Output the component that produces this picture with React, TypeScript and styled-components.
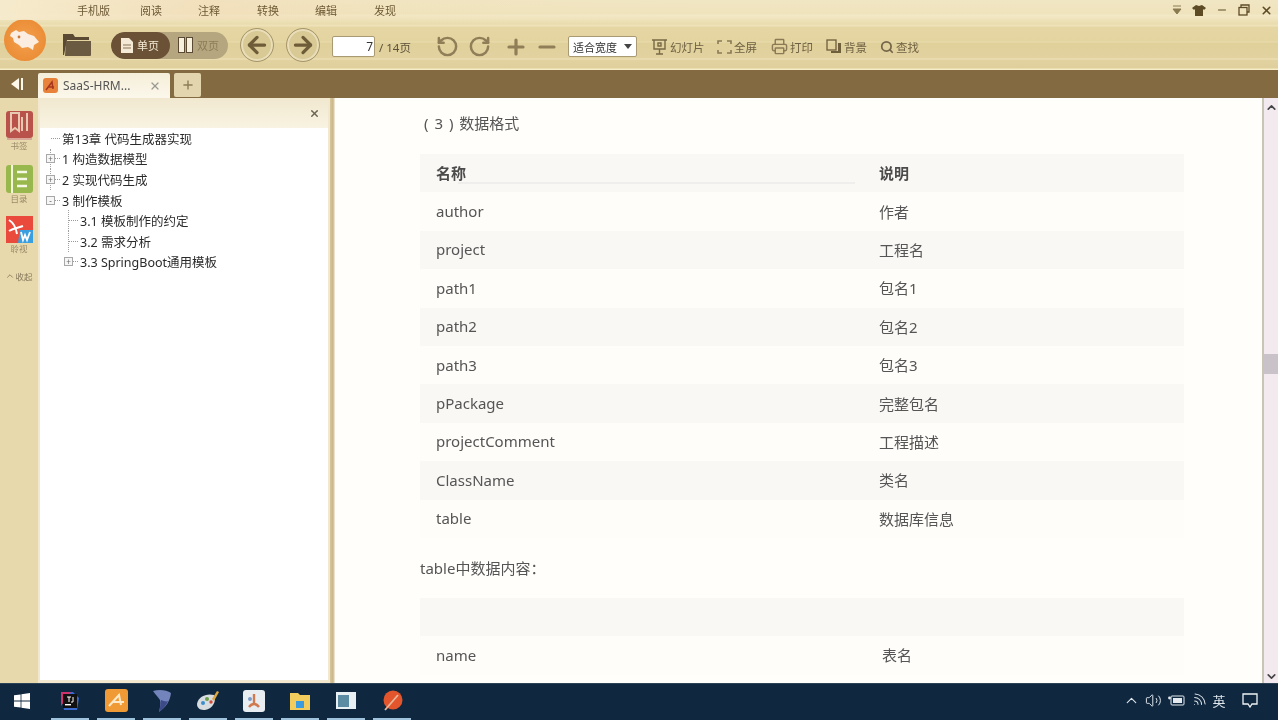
import React from "react";
import styled, { createGlobalStyle } from "styled-components";
import { ArrowLeft, ArrowRight, RotateCcw, RotateCw, Plus, Minus, Printer, Search, X, ChevronUp, ChevronDown, Volume2, Wifi } from "lucide-react";

const Global = createGlobalStyle`
  html, body { margin: 0; padding: 0; background: #fffefb; overflow: hidden; }
  * { box-sizing: border-box; }
`;
const CJK = `"Noto Sans", "Noto Sans CJK SC", sans-serif`;

const Shell = styled.div`
  width: 1278px; height: 720px; display: flex; flex-direction: column; overflow: hidden;
  font-family: ${CJK}; filter: blur(0.5px);
`;
const Head = styled.header`
  height: 70px; flex: none; display: flex; flex-direction: column;
  background: linear-gradient(180deg, #f1e6c3 0, #efe3bc 14px, #f3e9c8 15px, #e9dcae 24px, #f0e4bb 26px, #e5d6a4 27px, #e3d4a0 41px, #e9dcae 42px, #e0d09a 43px, #e2d2a0 58px, #efe3bb 59px, #e2d29f 60px, #dfcf9b 68px, #f6edc8 69px, #f6edc8 70px);
`;
const MenuRow = styled.div`
  height: 20px; flex: none; display: flex; align-items: center; padding-left: 77px; position: relative;
  background: linear-gradient(90deg, rgba(246,235,205,.9), rgba(244,220,185,.55) 200px, rgba(240,226,184,.2) 420px, transparent 700px);
`;
const MenuItem = styled.span<{ $w: number }>`
  width: ${p => p.$w}px; flex: none; font-size: 11px; color: #6d5a35; white-space: nowrap;
`;
const WinControls = styled.div`
  margin-left: auto; display: flex; align-items: center; gap: 0; height: 16px; color: #5d4b26;
`;
const WinBtn = styled.span`
  width: 22.5px; display: flex; justify-content: center; align-items: center;
`;
const ToolRow = styled.div`
  flex: 1; min-height: 0; display: flex; align-items: center; padding: 3px 0 0 3px;
`;
const Logo = styled.div`
  width: 42px; height: 42px; border-radius: 50%; flex: none; margin: 0 15px 13px 1px;
  display: flex; align-items: center; justify-content: center;
  background: radial-gradient(circle at 50% 50%, #f4a04c, #e8862f);
`;
const Folder = styled.div`
  width: 31px; flex: none; margin: 0 19px 6px 0; display: flex;
`;
const Toggle = styled.div`
  width: 117px; height: 27px; flex: none; border-radius: 14px; display: flex; margin: 0 12px 3px 0;
  background: #b6a67f; overflow: hidden;
`;
const ToggleItem = styled.div<{ $on?: boolean }>`
  width: ${p => (p.$on ? 59 : 58)}px; display: flex; align-items: center; gap: 4px; padding-left: ${p => (p.$on ? 10 : 8)}px;
  border-radius: 14px; font-size: 11px; color: ${p => (p.$on ? "#f5ecd6" : "#8d7d58")};
  background: ${p => (p.$on ? "#6b5136" : "transparent")};
`;
const Round = styled.div<{ $mr: number }>`
  width: 34px; height: 34px; border-radius: 50%; flex: none; margin: 0 ${p => p.$mr}px 4px 0;
  border: 1px solid #a7966a; box-shadow: inset 0 0 0 2px #e9deb9;
  display: flex; align-items: center; justify-content: center; color: #6e5c38; background: #d8c995;
`;
const PageInput = styled.div`
  width: 43px; height: 21px; flex: none; background: #fff; border: 1px solid #a99a74; border-radius: 2px;
  text-align: right; padding-right: 1px; font-size: 12px; line-height: 20px; color: #333;
`;
const PageTotal = styled.span`
  width: 61px; flex: none; padding-left: 4px; font-size: 11.5px; color: #5d5138; white-space: nowrap;
`;
const Ico = styled.span<{ $w: number; $c?: string }>`
  width: ${p => p.$w}px; flex: none; display: flex; align-items: center; color: ${p => p.$c || "#8f7e58"};
`;
const Select = styled.div`
  width: 69px; height: 21px; flex: none; margin-right: 14px; background: #fff; border: 1px solid #a99a74; border-radius: 2px;
  display: flex; align-items: center; justify-content: space-between; padding: 0 4px;
  font-size: 11px; color: #333; white-space: nowrap;
`;
const Caret = styled.span`
  width: 0; height: 0; border-left: 4px solid transparent; border-right: 4px solid transparent; border-top: 5px solid #444;
`;
const Tool = styled.div<{ $w: number }>`
  width: ${p => p.$w}px; flex: none; display: flex; align-items: center; gap: 2px;
  font-size: 11.5px; color: #6f6143; white-space: nowrap;
`;
const TabBar = styled.div`
  height: 28px; flex: none; display: flex; align-items: flex-end; background: #836a40;
`;
const CollapseBtn = styled.div`
  width: 38px; height: 28px; flex: none; display: flex; align-items: center; justify-content: center;
`;
const Tab = styled.div`
  width: 132px; height: 25px; flex: none; background: linear-gradient(180deg, #f5eed9, #fbf7ea); border-radius: 2px 2px 0 0;
  display: flex; align-items: center; padding: 0 9px 0 5px; font-size: 12px; color: #555;
`;
const TabBadge = styled.span`
  width: 15px; height: 15px; flex: none; border-radius: 3px; background: #e8823a; margin-right: 5px;
  display: flex; align-items: center; justify-content: center;
`;
const TabName = styled.span`
  flex: 1; white-space: nowrap;
`;
const NewTab = styled.div`
  width: 27px; height: 24px; flex: none; margin: 0 0 1px 4px; background: #e3d6ae; border-radius: 2px;
  display: flex; align-items: center; justify-content: center; color: #8d7d58;
`;
const Body = styled.div`
  flex: 1; min-height: 0; display: flex; background: #e4d5a4;
`;
const Rail = styled.nav`
  width: 38px; flex: none; display: flex; flex-direction: column; align-items: center; padding-top: 13px;
  background: #e8d9ad;
`;
const RailItem = styled.div<{ $mb: number }>`
  display: flex; flex-direction: column; align-items: center; margin-bottom: ${p => p.$mb}px;
  font-size: 8.5px; line-height: 12px; color: #9a8b69;
`;
const RailFold = styled.div`
  display: flex; align-items: center; margin-top: 6px; font-size: 8.5px; color: #85775a; white-space: nowrap;
`;
const Outline = styled.aside`
  width: 292px; flex: none; display: flex; flex-direction: column; padding: 0 2px 3px; background: #f1e8cf;
`;
const OutlineHead = styled.div`
  height: 30px; flex: none; display: flex; align-items: center; justify-content: flex-end; padding-right: 8px; color: #6b6250;
  background: linear-gradient(180deg, #f1e8cf, #f8f3e2);
`;
const Tree = styled.div`
  flex: 1; background: #fff; padding: 0 0 0 6px; display: flex; flex-direction: column;
`;
const TreeRow = styled.div<{ $lvl: number; $line?: boolean }>`
  height: 20.6px; flex: none; display: flex; align-items: center; padding-left: ${p => p.$lvl * 18}px; position: relative;
  font-size: 12.5px; color: #2a2a2a; white-space: nowrap;
  ${p => p.$line ? `&::before { content: ""; position: absolute; left: ${p.$lvl * 18 + 4}px; top: 0; bottom: 0; border-left: 1px dotted #a0a0a0; }` : ""}
`;
const Expander = styled.span`
  width: 9px; height: 9px; flex: none; border: 1px solid #a8a8a8; position: relative; z-index: 1; color: #666;
  font-size: 8px; line-height: 7px; text-align: center; background: #f6f6f6;
`;
const Dots = styled.span<{ $w: number; $ml?: number }>`
  width: ${p => p.$w}px; flex: none; border-top: 1px dotted #999; margin: 0 2px 0 ${p => p.$ml || 0}px;
`;
const Divider = styled.div`
  width: 5px; flex: none; background: linear-gradient(90deg, #d8c79a, #c9b68a 60%, #f4ede0);
`;
const PageView = styled.main`
  flex: 1; min-width: 0; background: #fffefb; padding-left: 85px; overflow: hidden;
  border-right: 2px solid #c9c5b5;
  color: #555; font-size: 15px;
`;
const Para = styled.p<{ $h: number; $pl?: number; $pb?: number }>`
  margin: 0; height: ${p => p.$h}px; display: flex; align-items: center; color: #555; font-size: 15px;
  padding: 0 0 ${p => p.$pb || 0}px ${p => p.$pl || 0}px; white-space: pre; word-spacing: 2px;
`;
const DataTable = styled.table`
  width: 764px; border-collapse: collapse; table-layout: fixed;
`;
const Row = styled.tr<{ $alt?: boolean }>`
  height: 38.4px; background: ${p => (p.$alt ? "#faf8f5" : "#fffdfa")};
`;
const Th = styled.th<{ $w?: number; $rule?: boolean }>`
  ${p => (p.$w ? `width: ${p.$w}px;` : "")} padding: 0 0 1px 16px; text-align: left; font-weight: 700; font-size: 15px; color: #4b4b4b; position: relative;
  ${p => p.$rule ? `&::after { content: ""; position: absolute; left: 38px; right: 8px; top: 28px; height: 2px; background: #efeeec; }` : ""}
`;
const Td = styled.td<{ $pad?: number }>`
  padding: 0 0 1px ${p => p.$pad ?? 16}px; font-size: 15px; color: #555;
`;
const Scroll = styled.div`
  width: 14px; flex: none; display: flex; flex-direction: column; align-items: center; background: #f3eaf0; color: #444; padding-top: 3px;
`;
const ScrollTrack = styled.div`
  flex: 1; width: 100%; padding-top: 240px;
`;
const Thumb = styled.div`
  height: 20px; width: 100%; background: #c9c3c9;
`;
const Taskbar = styled.footer`
  height: 37px; flex: none; display: flex; align-items: center; background: #10283f; color: #e8edf2;
  border-top: 1px solid #2c4256;
`;
const Start = styled.div`
  width: 47px; flex: none; display: flex; justify-content: center; padding: 0 3px 3px 0;
`;
const TaskApp = styled.div`
  width: 46px; height: 36px; flex: none; position: relative; display: flex; align-items: center; justify-content: center; padding-bottom: 3px;
  &::after { content: ""; position: absolute; left: 4px; right: 4px; bottom: 0; height: 2px; background: #9fc3dc; }
`;
const Tray = styled.div`
  margin-left: auto; display: flex; align-items: center; padding-bottom: 3px;
`;
const TraySlot = styled.span<{ $w: number }>`
  width: ${p => p.$w}px; flex: none; display: flex; justify-content: center; align-items: center; font-size: 13px; color: #dfe6ec;
`;

const rows: [string, string][] = [
  ["author", "作者"], ["project", "工程名"], ["path1", "包名1"], ["path2", "包名2"], ["path3", "包名3"],
  ["pPackage", "完整包名"], ["projectComment", "工程描述"], ["ClassName", "类名"], ["table", "数据库信息"],
];

export default function App() {
  return (
    <Shell>
      <Global />
      <Head>
        <MenuRow>
          {[["手机版", 63], ["阅读", 58], ["注释", 59], ["转换", 58], ["编辑", 59], ["发现", 60]].map(([t, w]) => (
            <MenuItem key={t as string} $w={w as number}>{t}</MenuItem>
          ))}
          <WinControls>
            <WinBtn><svg width="12" height="10" viewBox="0 0 12 10"><path d="M2 1h8M2 4h8L6 9z" fill="#8a7a50" stroke="#8a7a50" /></svg></WinBtn>
            <WinBtn><svg width="14" height="11" viewBox="0 0 14 11"><path d="M4 0 0 3l2 2 1-1v7h8V4l1 1 2-2-4-3-3 1z" fill="#5d4b26" /></svg></WinBtn>
            <WinBtn><Minus size={12} strokeWidth={2} /></WinBtn>
            <WinBtn><svg width="12" height="12" viewBox="0 0 12 12" fill="none" stroke="#5d4b26" strokeWidth="1.3"><path d="M3 3V1h8v7H9" /><rect x="1" y="3.5" width="8" height="7.5" /></svg></WinBtn>
            <WinBtn><X size={13} strokeWidth={3} /></WinBtn>
          </WinControls>
        </MenuRow>
        <ToolRow>
          <Logo>
            <svg width="34" height="26" viewBox="0 0 34 26"><path d="M3 6 8 3l3 2 5-1 4 3 6 2 5 6-5 3-1 5-5-3-6 1-3-3-5-3-1-4-3-2z" fill="#fbeee0" /><circle cx="11" cy="10" r="1.4" fill="#c77a3a" /></svg>
          </Logo>
          <Folder>
            <svg width="31" height="26" viewBox="0 0 31 26"><path d="M2 3h10l2 3h14v3H6L3 24H2z" fill="#5a4a33" /><path d="M5 10h25v14a1 1 0 0 1-1 1H4z" fill="#6b5a42" /></svg>
          </Folder>
          <Toggle>
            <ToggleItem $on>
              <svg width="12" height="15" viewBox="0 0 12 15"><path d="M0 0h8l4 4v11H0z" fill="#f4ead6" /><path d="M2 7h8M2 10h8" stroke="#8b7355" /></svg>
              单页
            </ToggleItem>
            <ToggleItem>
              <svg width="15" height="16" viewBox="0 0 15 16"><rect x=".5" y=".5" width="6" height="15" fill="#f7f0dc" stroke="#5a4a33" /><rect x="8.5" y=".5" width="6" height="15" fill="#f7f0dc" stroke="#5a4a33" /></svg>
              双页
            </ToggleItem>
          </Toggle>
          <Round $mr={12}><ArrowLeft size={26} strokeWidth={3} /></Round>
          <Round $mr={12}><ArrowRight size={26} strokeWidth={3} /></Round>
          <PageInput>7</PageInput>
          <PageTotal>/ 14页</PageTotal>
          <Ico $w={32}><RotateCcw size={23} strokeWidth={2.6} /></Ico>
          <Ico $w={36}><RotateCw size={23} strokeWidth={2.6} /></Ico>
          <Ico $w={31}><Plus size={24} strokeWidth={3.2} /></Ico>
          <Ico $w={33}><Minus size={24} strokeWidth={3.2} /></Ico>
          <Select>适合宽度<Caret /></Select>
          <Tool $w={66}>
            <svg width="17" height="16" viewBox="0 0 17 16" fill="none" stroke="#7a6a45" strokeWidth="1.4"><path d="M1 1h15M3 1v9h11V1M8.5 10v5M5 15h7" /><path d="M7 4h3v3H7z" /></svg>
            幻灯片
          </Tool>
          <Tool $w={54}>
            <svg width="15" height="14" viewBox="0 0 15 14" fill="none" stroke="#8a7a55" strokeWidth="1.6"><path d="M1 4V1h4M10 1h4v3M14 10v3h-4M5 13H1v-3" /></svg>
            全屏
          </Tool>
          <Tool $w={55}><Printer size={17} color="#8a7a55" />打印</Tool>
          <Tool $w={54}>
            <svg width="16" height="15" viewBox="0 0 16 15"><rect x="1" y="1" width="9" height="10" fill="none" stroke="#6f5f3b" strokeWidth="1.3" /><path d="M12 4h3v10H5v-2h7z" fill="#6f5f3b" /></svg>
            背景
          </Tool>
          <Tool $w={42}><Search size={14} strokeWidth={3} color="#75664a" />查找</Tool>
        </ToolRow>
      </Head>
      <TabBar>
        <CollapseBtn>
          <svg width="16" height="12" viewBox="0 0 16 12"><path d="M0 6 8 0v12z" fill="#fdf8ea" /><rect x="10" y="0" width="2" height="12" fill="#fdf8ea" /></svg>
        </CollapseBtn>
        <Tab>
          <TabBadge>
            <svg width="11" height="11" viewBox="0 0 11 11" fill="none" stroke="#a8351f" strokeWidth="1.5"><path d="M1 10 7 2l1 7M3 7h6" /></svg>
          </TabBadge>
          <TabName>SaaS-HRM...</TabName>
          <X size={12} strokeWidth={2.4} color="#9a9a92" />
        </Tab>
        <NewTab><Plus size={14} strokeWidth={2.4} /></NewTab>
      </TabBar>
      <Body>
        <Rail>
          <RailItem $mb={13}>
            <svg width="27" height="29" viewBox="0 0 27 29"><rect width="27" height="27" rx="3" fill="#b8524a" /><path d="M5 2v18l4-3 4 3V2zM16 6v14M21 2v18" stroke="#e8c8b0" strokeWidth="2" fill="none" /><rect x="1" y="27" width="25" height="2" fill="#d9a898" /></svg>
            书签
          </RailItem>
          <RailItem $mb={11}>
            <svg width="27" height="28" viewBox="0 0 27 28"><rect width="27" height="28" rx="3" fill="#98b84e" /><rect x="5" y="0" width="2" height="28" fill="#f3f6dc" /><path d="M11 7h10M11 14h10M11 21h10" stroke="#f5f8e4" strokeWidth="2.4" /></svg>
            目录
          </RailItem>
          <RailItem $mb={9}>
            <svg width="27" height="27" viewBox="0 0 27 27"><rect width="27" height="27" fill="#ea4a3c" /><path d="M14 14 27 14V27H12z" fill="#3a9fe0" /><path d="M3 4c5 3 7 8 8 14M3 15c5-3 9-3 14-5" stroke="#fff" strokeWidth="2" fill="none" /><path d="M15 16l2 8 2-5 2 5 3-8" stroke="#fff" strokeWidth="1.8" fill="none" /></svg>
            聆视
          </RailItem>
          <RailFold><ChevronUp size={10} />收起</RailFold>
        </Rail>
        <Outline>
          <OutlineHead><X size={11} strokeWidth={3} /></OutlineHead>
          <Tree>
            <TreeRow $lvl={0}><Dots $w={9} $ml={5} />第13章 代码生成器实现</TreeRow>
            <TreeRow $lvl={0} $line><Expander>+</Expander><Dots $w={5} />1 构造数据模型</TreeRow>
            <TreeRow $lvl={0} $line><Expander>+</Expander><Dots $w={5} />2 实现代码生成</TreeRow>
            <TreeRow $lvl={0}><Expander>-</Expander><Dots $w={5} />3 制作模板</TreeRow>
            <TreeRow $lvl={1} $line><Dots $w={9} $ml={5} />3.1 模板制作的约定</TreeRow>
            <TreeRow $lvl={1} $line><Dots $w={9} $ml={5} />3.2 需求分析</TreeRow>
            <TreeRow $lvl={1}><Expander>+</Expander><Dots $w={5} />3.3 SpringBoot通用模板</TreeRow>
          </Tree>
        </Outline>
        <Divider />
        <PageView>
          <Para $h={52} $pl={4} $pb={4}>( 3 ) 数据格式</Para>
          <Para $h={4} />
          <DataTable>
            <thead>
              <Row $alt><Th $w={443} $rule>名称</Th><Th>说明</Th></Row>
            </thead>
            <tbody>
              {rows.map(([a, b], i) => (
                <Row key={a} $alt={i % 2 === 1}><Td>{a}</Td><Td>{b}</Td></Row>
              ))}
            </tbody>
          </DataTable>
          <Para $h={60}>table中数据内容：</Para>
          <DataTable>
            <thead><Row $alt><Th $w={446} /><Th /></Row></thead>
            <tbody>
              <Row><Td>name</Td><Td>表名</Td></Row>
            </tbody>
          </DataTable>
        </PageView>
        <Scroll>
          <ChevronUp size={13} strokeWidth={3} />
          <ScrollTrack><Thumb /></ScrollTrack>
          <ChevronDown size={13} strokeWidth={3} />
        </Scroll>
      </Body>
      <Taskbar>
        <Start>
          <svg width="16" height="16" viewBox="0 0 16 16" fill="#fff"><path d="M0 2.3 6.6 1.4v6.2H0zM7.4 1.3 16 0v7.6H7.4zM0 8.4h6.6v6.2L0 13.7zM7.4 8.4H16V16l-8.6-1.3z" /></svg>
        </Start>
        <TaskApp>
          <svg width="22" height="22" viewBox="0 0 22 22"><path d="M2 2h12l6 6-2 12H5z" fill="#3a6bd0" /><path d="M2 2h10L2 16z" fill="#d0336c" /><rect x="4" y="4" width="14" height="14" fill="#111" /><rect x="6" y="14" width="6" height="1.4" fill="#fff" /><path d="M8 7h4M10 7v5M14 7v5h-2" stroke="#fff" /></svg>
        </TaskApp>
        <TaskApp>
          <svg width="23" height="23" viewBox="0 0 23 23"><rect width="23" height="23" rx="3" fill="#ef9a35" /><path d="M4 17 14 6l2 10M7 13h12" stroke="#fde9c8" strokeWidth="2" fill="none" /></svg>
        </TaskApp>
        <TaskApp>
          <svg width="20" height="24" viewBox="0 0 20 24"><path d="M1 2c6-2 14-1 18 2-1 8-5 14-12 19 1-5 2-8 1-12-2-3-5-6-7-9z" fill="#7383bb" /><path d="M9 11c3 1 5 2 7 1-2 5-5 8-9 11 1-5 2-8 2-12z" fill="#3d4a8a" /></svg>
        </TaskApp>
        <TaskApp>
          <svg width="24" height="22" viewBox="0 0 24 22"><path d="M1 14C2 7 10 3 18 5c3 5-1 14-9 15-4 0-8-1-8-6z" fill="#d6dcdf" /><circle cx="7" cy="13" r="2" fill="#3d8ecb" /><circle cx="11" cy="9" r="2" fill="#6b9c4a" /><circle cx="15" cy="12" r="1.7" fill="#d34a3a" /><path d="m16 9 5-8 2 1-5 9z" fill="#e0a840" /></svg>
        </TaskApp>
        <TaskApp>
          <svg width="22" height="22" viewBox="0 0 22 22"><rect width="22" height="22" rx="3" fill="#e8edf2" /><path d="M11 4v9M6 17c3-4 7-4 10 0" stroke="#d07a50" strokeWidth="2.4" fill="none" /><circle cx="7" cy="9" r="2" fill="#7a9ccc" /></svg>
        </TaskApp>
        <TaskApp>
          <svg width="20" height="18" viewBox="0 0 20 18"><path d="M0 1h8l2 2h10v15H0z" fill="#f2cc5c" /><rect x="6" y="9" width="8" height="7" fill="#3a9be0" /></svg>
        </TaskApp>
        <TaskApp>
          <svg width="20" height="17" viewBox="0 0 20 17"><rect width="20" height="17" fill="#e9f0f4" /><rect x="2" y="3" width="11" height="12" fill="#5c8ca4" /></svg>
        </TaskApp>
        <TaskApp>
          <svg width="21" height="22" viewBox="0 0 21 22"><circle cx="11" cy="10" r="9.5" fill="#e3552c" /><path d="M3 20 16 5" stroke="#e8b89a" strokeWidth="1.8" /></svg>
        </TaskApp>
        <Tray>
          <TraySlot $w={22}><ChevronUp size={17} strokeWidth={1.6} /></TraySlot>
          <TraySlot $w={22}><Volume2 size={17} strokeWidth={1.4} /></TraySlot>
          <TraySlot $w={24}>
            <svg width="17" height="11" viewBox="0 0 17 11"><rect x="3" y="1" width="13" height="9" rx="1" fill="none" stroke="#e5eaef" /><rect x="5" y="3" width="9" height="5" fill="#e5eaef" /><circle cx="1.5" cy="3" r="1.4" fill="#e5eaef" /></svg>
          </TraySlot>
          <TraySlot $w={20}><Wifi size={17} strokeWidth={1.4} style={{ transform: "rotate(45deg)" }} /></TraySlot>
          <TraySlot $w={22}>英</TraySlot>
          <TraySlot $w={39}>
            <svg width="16" height="15" viewBox="0 0 16 15" fill="none" stroke="#eef2f5" strokeWidth="1.3"><path d="M1 1h14v10h-5l-2 3-2-3H1z" /></svg>
          </TraySlot>
          <TraySlot $w={9} />
        </Tray>
      </Taskbar>
    </Shell>
  );
}
